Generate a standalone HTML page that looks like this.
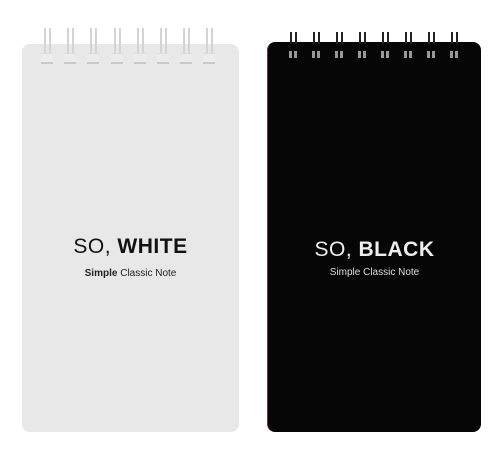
<!DOCTYPE html>
<html><head><style>
body{margin:0;width:500px;height:465px;background:#fff;position:relative;overflow:hidden;font-family:"Liberation Sans",sans-serif}
.nb{position:absolute;border-radius:8px}
.w{left:22px;top:44px;width:217px;height:388px;background:#e8e8e8}
.b{left:267px;top:42px;width:213px;height:390px;background:#060606;border-left:1px solid #6a3a36}
.t1{position:absolute;width:100%;text-align:center;font-size:21px;letter-spacing:0.5px}
.t2{position:absolute;width:100%;text-align:center;font-size:10px}
.ring{position:absolute;width:2px;background:#d4d4d4}
.bring{position:absolute;width:2px;background:#222}
</style></head><body>
<div class="nb w">
<div class="t1" style="top:191px;left:0;color:#111">SO, <b>WHITE</b></div>
<div class="t2" style="top:224px;color:#222"><b>Simple</b> Classic Note</div>
</div>
<div class="nb b">
<div class="t1" style="top:196px;color:#eee">SO, <b>BLACK</b></div>
<div class="t2" style="top:225px;color:#ddd">Simple Classic Note</div>
</div>
<div id="r"></div>
<script>
var h='';
for(var i=0;i<8;i++){var x=44+i*23.2;
h+='<div class="ring" style="left:'+x+'px;top:28px;height:34px"></div><div class="ring" style="left:'+(x+5)+'px;top:28px;height:34px"></div>';
h+='<div style="position:absolute;left:'+(x-3)+'px;top:53px;width:12px;height:8px;border-top:1px solid #ddd;border-bottom:2px solid #c8c8c8;background:#ececec"></div>';
var bx=290+i*23;
h+='<div class="bring" style="left:'+bx+'px;top:32px;height:12px"></div><div class="bring" style="left:'+(bx+5)+'px;top:32px;height:12px"></div>';
h+='<div style="position:absolute;left:'+(bx-1)+'px;top:51px;width:3px;height:7px;background:#999"></div><div style="position:absolute;left:'+(bx+4)+'px;top:51px;width:3px;height:7px;background:#999"></div>';}
document.getElementById('r').innerHTML=h;
</script>
</body></html>
